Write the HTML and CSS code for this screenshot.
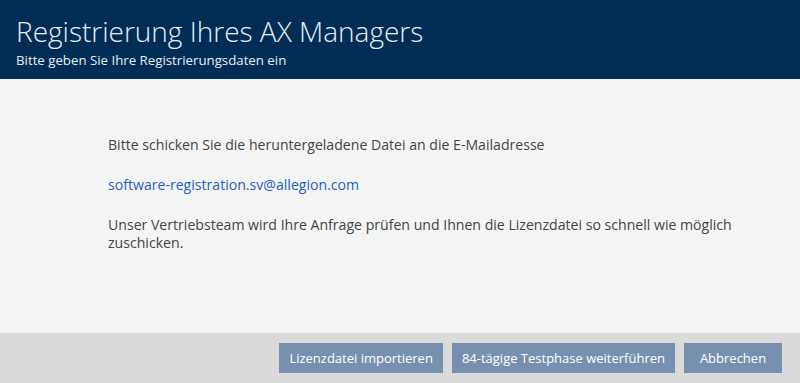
FILE: index.html
```html
<!DOCTYPE html>
<html lang="de">
<head>
  <meta charset="UTF-8">
  <title>Registrierung Ihres AX Managers</title>
  <link rel="stylesheet" href="styles.css">
</head>
<body>

  <header class="head">
    <h1>Registrierung Ihres AX Managers</h1>
    <p>Bitte geben Sie Ihre Registrierungsdaten ein</p>
  </header>

  <main class="content">
    <p>Bitte schicken Sie die heruntergeladene Datei an die E-Mailadresse</p>
    <p><a href="#">software-registration.sv@allegion.com</a></p>
    <p>Unser Vertriebsteam wird Ihre Anfrage prüfen und Ihnen die Lizenzdatei so schnell wie möglich zuschicken.</p>
  </main>

  <footer class="actions">
    <button class="btn">Lizenzdatei importieren</button>
    <button class="btn">84-tägige Testphase weiterführen</button>
    <button class="btn btn-cancel">Abbrechen</button>
  </footer>

</body>
</html>
```

FILE: styles.css
```css
html, body {
  height: 100%;
}
body {
  margin: 0;
  font-family: "Open Sans", Arial, sans-serif;
  display: flex;
  flex-direction: column;
  background-color: #f4f4f4;
  color: #444;
}
.head {
  background-color: #002d56;
  color: #e8eef5;
  height: 79px;
  box-sizing: border-box;
  padding: 12px 16px 0;
}
.head h1 {
  margin: 0;
  font-weight: 300;
  font-size: 28px;
  line-height: 38px;
}
.head p {
  margin: 0;
  font-size: 13.25px;
  line-height: 20px;
}
.content {
  flex: 1;
  padding: 57px 40px 0 108px;
  font-size: 14.1px;
  line-height: 18px;
}
.content p {
  margin: 0 0 22px;
  max-width: 640px;
}
.content a {
  color: #1f5fbf;
  text-decoration: none;
}
.actions {
  background-color: #dadada;
  height: 50px;
  display: flex;
  justify-content: flex-end;
  align-items: center;
  gap: 9px;
  padding: 0 18px 0 0;
}
.btn {
  background-color: #7890b0;
  color: white;
  border: none;
  height: 30px;
  padding: 0 10px;
  font-family: inherit;
  font-size: 13px;
}
.btn-cancel {
  width: 98px;
}
```
